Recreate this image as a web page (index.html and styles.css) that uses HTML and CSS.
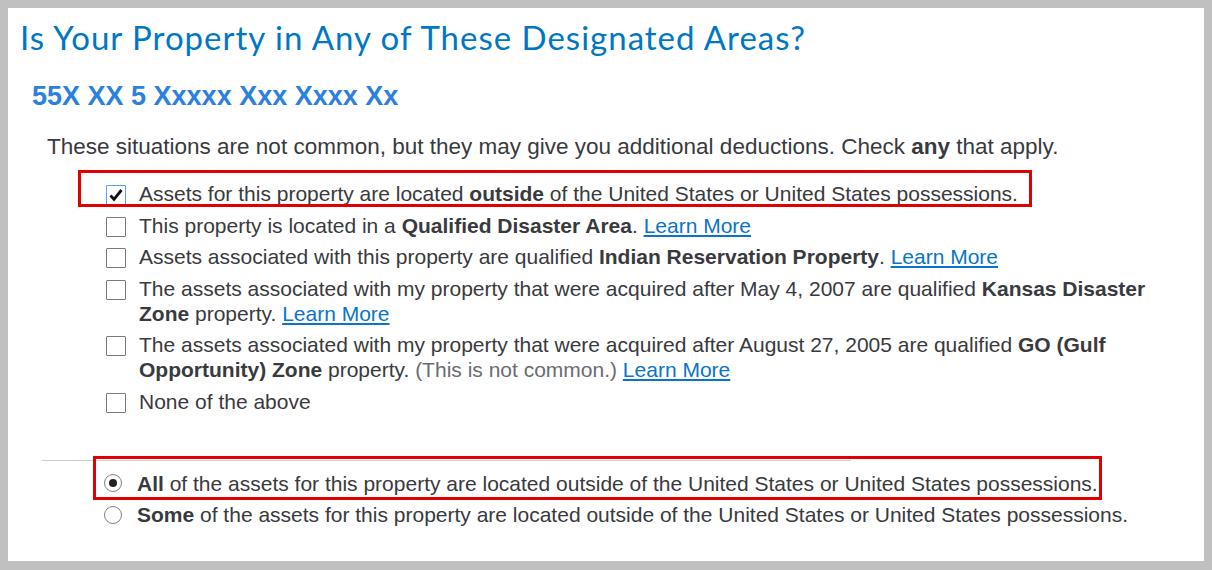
FILE: index.html
```html
<!DOCTYPE html>
<html>

<head>
    <title>Designated Areas</title>
    <link rel="stylesheet" href="styles.css">
</head>

<body>
    <div class="panel">
        <h1 class="title">Is Your Property in Any of These Designated Areas?</h1>
        <h2 class="subtitle">55X XX 5 Xxxxx Xxx Xxxx Xx</h2>
        <p class="intro">These situations are not common, but they may give you additional deductions. Check <b>any</b> that apply.</p>

        <ul class="options">
            <li class="option highlight">
                <span class="checkbox checked">
                    <svg width="18" height="18" viewBox="0 0 18 18"><path d="M3.5 9.5l3.5 3.8L14.5 4" fill="none" stroke="#111" stroke-width="2.8"/></svg>
                </span>
                <span class="label">Assets for this property are located <b>outside</b> of the United States or United States possessions.</span>
            </li>
            <li class="option">
                <span class="checkbox"></span>
                <span class="label">This property is located in a <b>Qualified Disaster Area</b>. <a href="#">Learn More</a></span>
            </li>
            <li class="option">
                <span class="checkbox"></span>
                <span class="label">Assets associated with this property are qualified <b>Indian Reservation Property</b>. <a href="#">Learn More</a></span>
            </li>
            <li class="option">
                <span class="checkbox"></span>
                <span class="label">The assets associated with my property that were acquired after May 4, 2007 are qualified <b>Kansas Disaster Zone</b> property. <a href="#">Learn More</a></span>
            </li>
            <li class="option">
                <span class="checkbox"></span>
                <span class="label">The assets associated with my property that were acquired after August 27, 2005 are qualified <b>GO (Gulf Opportunity) Zone</b> property. <span class="muted">(This is not common.)</span> <a href="#">Learn More</a></span>
            </li>
            <li class="option">
                <span class="checkbox"></span>
                <span class="label">None of the above</span>
            </li>
        </ul>

        <div class="divider"></div>

        <ul class="choices">
            <li class="option highlight-radio">
                <span class="radio selected"></span>
                <span class="label"><b>All</b> of the assets for this property are located outside of the United States or United States possessions.</span>
            </li>
            <li class="option">
                <span class="radio"></span>
                <span class="label"><b>Some</b> of the assets for this property are located outside of the United States or United States possessions.</span>
            </li>
        </ul>
    </div>
</body>

</html>
```

FILE: styles.css
```css
body {
    margin: 0;
    background-color: #c0c0c0;
    font-family: "Liberation Sans", Arial, sans-serif;
    color: #393a3d;
}

.panel {
    margin: 8px;
    height: 553px;
    box-sizing: border-box;
    padding: 9px 12px 0;
    background-color: #fff;
    overflow: hidden;
}

.title {
    margin: 0;
    font-family: Lato, sans-serif;
    font-size: 33px;
    line-height: 40px;
    letter-spacing: 1px;
    font-weight: normal;
    color: #0077c5;
}

.subtitle {
    margin: 24px 0 0 12px;
    font-size: 27px;
    line-height: 30px;
    font-weight: bold;
    color: #2b80e0;
}

.intro {
    margin: 23px 0 0 27px;
    font-size: 22.5px;
    line-height: 26px;
}

.options,
.choices {
    list-style: none;
    padding: 0;
    margin: 21px 0 0 86px;
    font-size: 21px;
    line-height: 25px;
}

.choices {
    margin: 10px 0 0 84px;
}

.option {
    display: flex;
    align-items: flex-start;
    margin-top: 6.5px;
}

.option:first-child {
    margin-top: 0;
}

.checkbox {
    flex: none;
    width: 20px;
    height: 20px;
    margin: 4px 13px 0 0;
    box-sizing: border-box;
    border: 1.5px solid #7a7a7a;
    border-radius: 1px;
    display: flex;
    align-items: center;
    justify-content: center;
}

.checkbox.checked {
    border-color: #5a9cf8;
}

.radio {
    flex: none;
    width: 18px;
    height: 18px;
    margin: 3.5px 15px 0 0;
    box-sizing: border-box;
    border: 1.5px solid #808080;
    border-radius: 50%;
    display: flex;
    align-items: center;
    justify-content: center;
}

.radio.selected::before {
    content: "";
    width: 8px;
    height: 8px;
    border-radius: 50%;
    background-color: #222;
}

.label a {
    color: #0a74c8;
}

.muted {
    color: #6b6c72;
}

.divider {
    margin: 46px 0 0 22px;
    width: 809px;
    border-top: 1px solid #ccc;
}

/* red annotation frames drawn over the chosen answers */
.highlight,
.highlight-radio {
    position: relative;
    width: fit-content;
}

.highlight::after,
.highlight-radio::after {
    content: "";
    position: absolute;
    border: 3px solid #e00000;
    pointer-events: none;
}

.highlight::after {
    left: -28px;
    right: -14px;
    top: -11px;
    bottom: -1px;
}

.highlight-radio::after {
    left: -11px;
    right: -4px;
    top: -15px;
    bottom: -4px;
}
```
